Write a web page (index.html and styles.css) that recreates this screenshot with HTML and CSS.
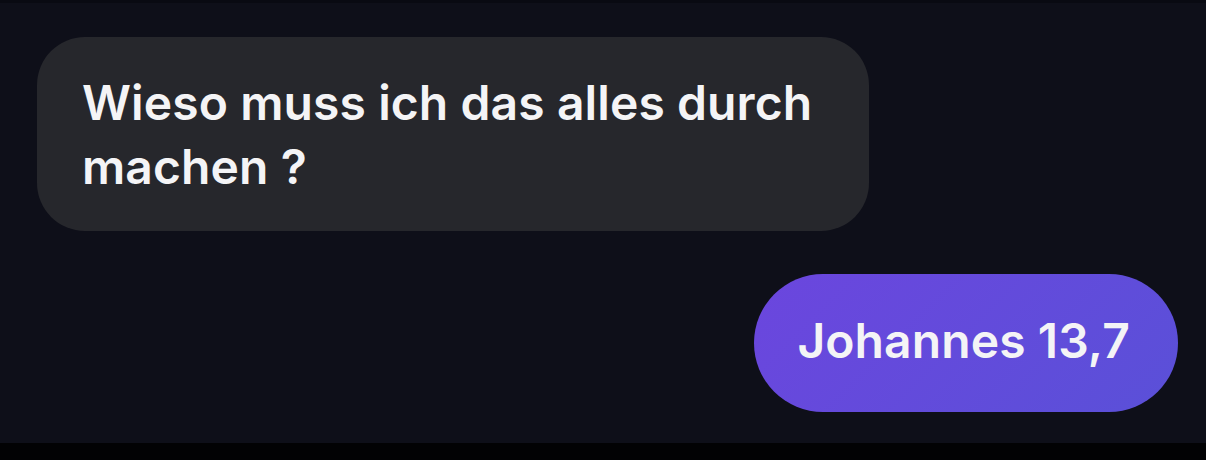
FILE: index.html
```html
<!DOCTYPE html>
<html lang="de">
<head>
  <meta charset="UTF-8">
  <meta name="viewport" content="width=device-width, initial-scale=1.0">
  <title>Chat</title>
  <link rel="stylesheet" href="styles.css">
</head>
<body>
  <main class="chat">
    <div class="bubble incoming">Wieso muss ich das alles durch machen ?</div>
    <div class="bubble outgoing">Johannes 13,7</div>
  </main>
  <div class="bottom-bar"></div>
</body>
</html>
```

FILE: styles.css
```css
body {
  margin: 0;
  height: 460px;
  overflow: hidden;
  background: #0e0f19;
  font-family: 'Inter', 'Noto Sans', sans-serif;
  color: #f4f4f6;
  display: flex;
  flex-direction: column;
  border-top: 3px solid #090a12;
  box-sizing: border-box;
}

.chat {
  flex: 1;
  display: flex;
  flex-direction: column;
  padding: 34px 28px 0 37px;
  gap: 43px;
}

.bubble {
  font-size: 48px;
  font-weight: 600;
  line-height: 64px;
  letter-spacing: 0.1px;
  box-sizing: border-box;
}

.incoming {
  align-self: flex-start;
  width: 832px;
  padding: 34px 56px 32px 45px;
  background: #26272c;
  border-radius: 48px;
}

.outgoing {
  align-self: flex-end;
  height: 138px;
  padding: 35px 48px 0 43px;
  background: linear-gradient(135deg, #6b46de, #5a50d8);
  border-radius: 69px;
}

.bottom-bar {
  height: 17px;
  background: #020204;
}
```
